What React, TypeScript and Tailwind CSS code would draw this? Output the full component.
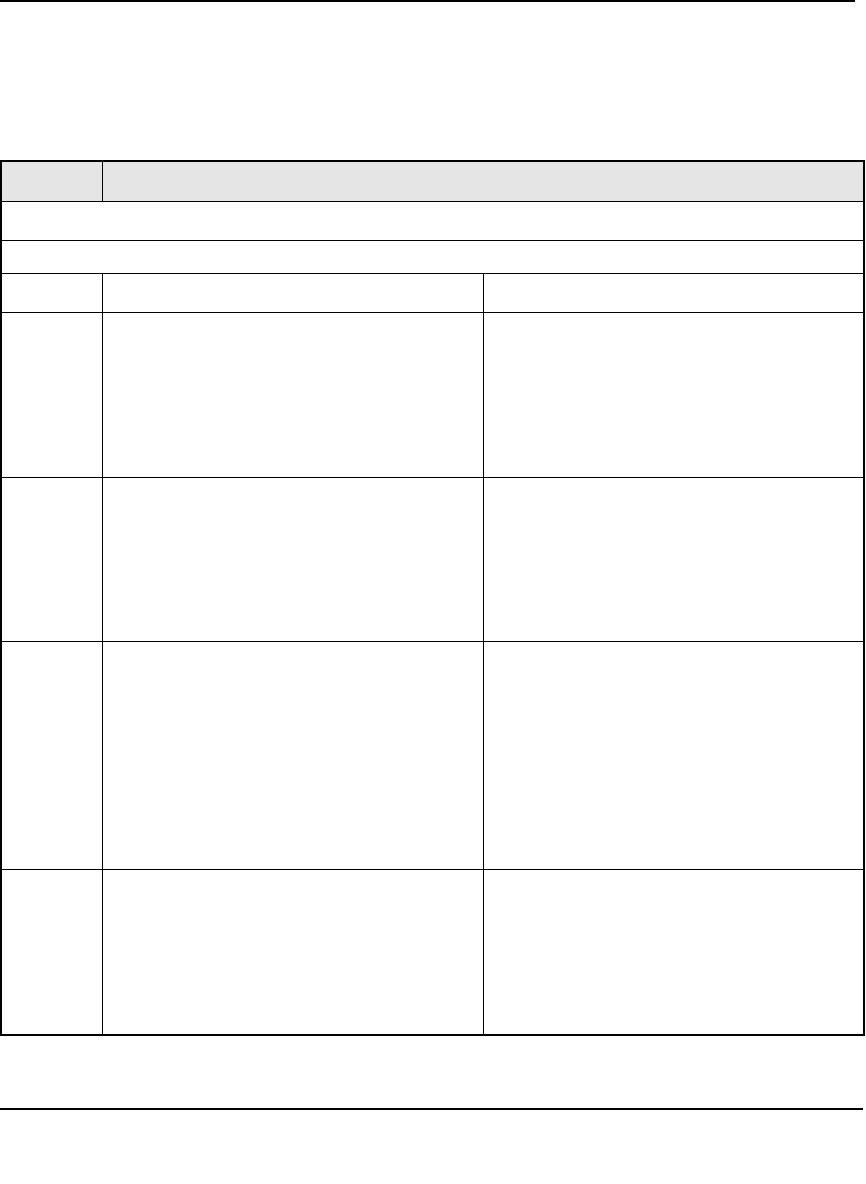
// Blank document-style table page: rules at top/bottom, bordered grid in between

const dataRows = [165, 164, 228, 164]

function ThreeCells({ h, last }: { h: number; last?: boolean }) {
  return (
    <div
      className={`flex ${last ? "" : "border-b border-black"}`}
      style={{ height: h }}
    >
      <div className="w-[101px] shrink-0 border-r border-black" />
      <div className="w-[381px] shrink-0 border-r border-black" />
      <div className="flex-1" />
    </div>
  )
}

export default function App() {
  return (
    <div className="relative h-[1184px] w-[866px] bg-white" style={{ fontFamily: '"Liberation Sans", Arial, sans-serif' }}>
      {/* header rule */}
      <div className="h-[2px] w-[855px] bg-black" />

      <div className="mt-[158px] w-[865px] border-2 border-black">
        {/* heading row */}
        <div className="flex h-[40px] border-b border-black bg-[#e5e5e5]">
          <div className="w-[101px] shrink-0 border-r border-black" />
          <div className="flex-1" />
        </div>

        {/* spanning rows */}
        <div className="h-[39px] border-b border-black" />
        <div className="h-[33px] border-b border-black" />

        {/* column heads */}
        <ThreeCells h={39} />

        {dataRows.map((h, i) => (
          <ThreeCells key={i} h={h} last={i === dataRows.length - 1} />
        ))}
      </div>

      {/* footer rule */}
      <div className="mt-[72px] h-[2px] w-[863px] bg-black" />
    </div>
  )
}
